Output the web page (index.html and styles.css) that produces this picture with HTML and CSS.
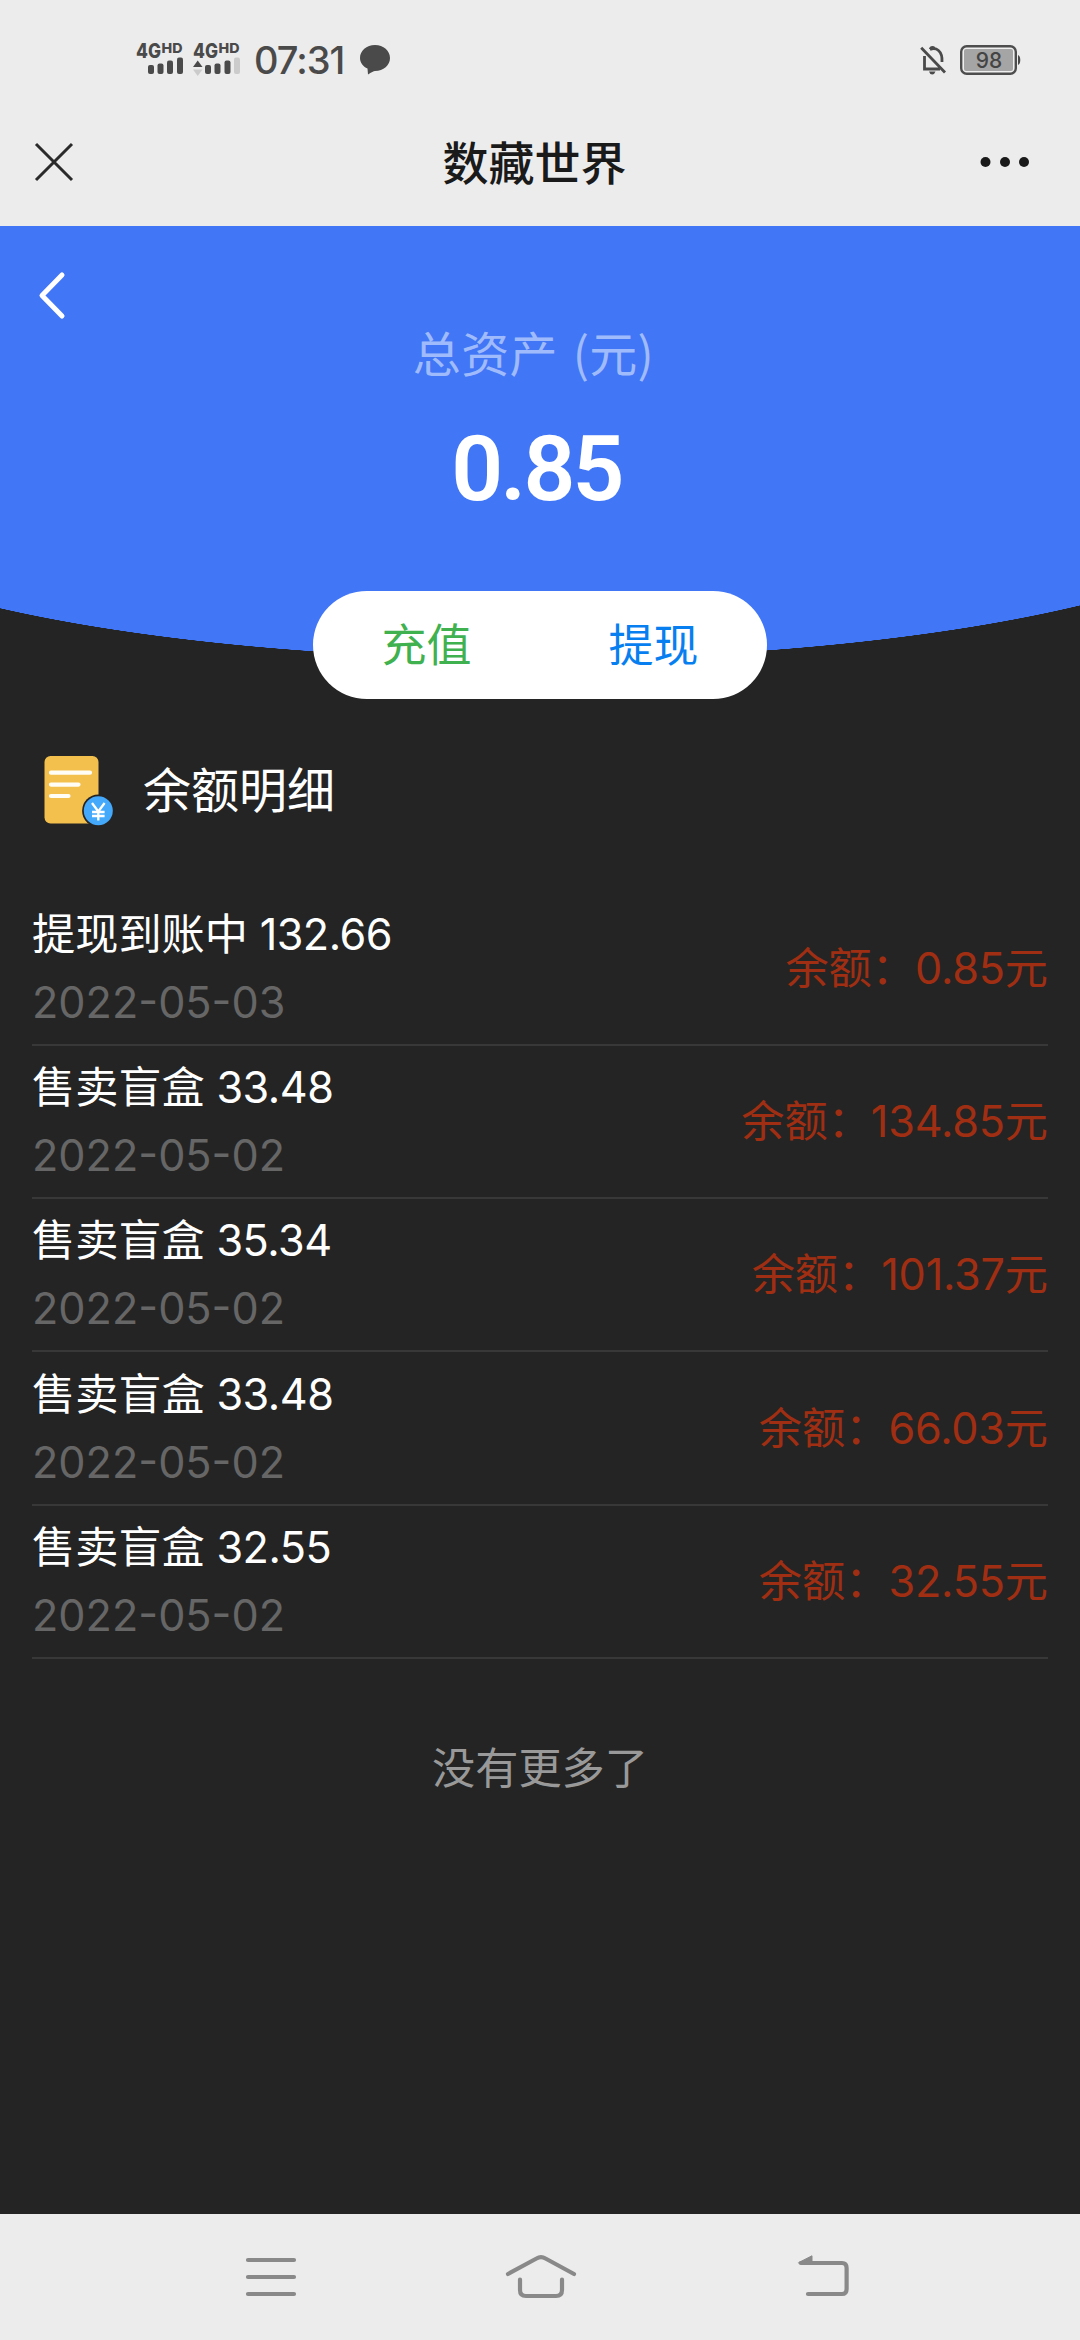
FILE: index.html
```html
<!DOCTYPE html>
<html lang="zh-CN">
<head>
<meta charset="utf-8">
<title>数藏世界</title>
<link rel="stylesheet" href="styles.css">
</head>
<body>
<div class="status-bar">
  <svg class="signal" width="48" height="38" viewBox="0 -4 48 38">
    <text class="net" x="0" y="16" textLength="25" lengthAdjust="spacingAndGlyphs">4G</text>
    <text class="net-hd" x="25.500" y="11" textLength="21" lengthAdjust="spacingAndGlyphs">HD</text>
    <g class="ink"><rect x="12" y="23" width="6" height="9" rx="2"/><rect x="21.500" y="21.500" width="6" height="10.500" rx="2"/><rect x="31" y="18.500" width="6" height="13.500" rx="2"/><rect x="41" y="15.500" width="6" height="16.500" rx="2"/></g>
  </svg>
  <svg class="signal second" width="48" height="38" viewBox="0 -4 48 38">
    <text class="net" x="0" y="16" textLength="25" lengthAdjust="spacingAndGlyphs">4G</text>
    <text class="net-hd" x="25.500" y="11" textLength="21" lengthAdjust="spacingAndGlyphs">HD</text>
    <path class="ink" d="M0 25L4.700 18.500 9.500 25z"/><path class="faint" d="M0 27.500H9.500L4.700 34z"/>
    <g class="ink"><rect x="12" y="23" width="6" height="9" rx="2"/><rect x="21.500" y="21.500" width="6" height="10.500" rx="2"/><rect x="31.500" y="18.500" width="6" height="13.500" rx="2"/></g>
    <rect class="faint" x="41" y="15.500" width="6" height="16.500" rx="2"/>
  </svg>
  <span class="clock">07:31</span>
  <svg class="bubble" width="30" height="30" viewBox="0 0 30 30"><path class="ink" d="M15 0C23.500 0 30 5.800 30 13S23.500 26 15 26Q13 26 8 29.500L7.500 23.500C3 21.500 0 17.500 0 13 0 5.800 6.500 0 15 0z"/></svg>
  <svg class="bell" width="28" height="30" viewBox="0 0 28 30"><path d="M1.200 1.800L25 26.500M4.500 10V23H20M10 3.500Q15 1.500 18.500 4.500 22.500 8 22 16" fill="none" stroke="#4a4a4a" stroke-width="2.800"/><path class="ink" d="M9 3Q9.500 0 12.500 0T15.500 3zM9 25.500H15.500Q14.500 28.500 12.200 28.500T9 25.500z"/></svg>
  <svg class="battery" width="61" height="30" viewBox="0 0 61 30"><rect x="1.200" y="1.200" width="54.600" height="27.600" rx="5.500" fill="#efefef" stroke="#4d4d4d" stroke-width="2.400"/><rect x="4" y="4" width="49" height="22" rx="2" fill="#a5a5a5"/><path class="ink" d="M58 10Q60.300 11 60.300 15T58 20z"/><text class="level" x="29" y="22.500" text-anchor="middle">98</text></svg>
</div>
<header class="title-bar">
  <svg width="38" height="38" viewBox="0 0 38 38"><path d="M1 1L37 37M37 1L1 37" stroke="#2a2a2a" stroke-width="3"/></svg>
  <h1>数藏世界</h1>
  <svg width="50" height="12" viewBox="0 0 50 12"><g fill="#1a1a1a"><circle cx="5.500" cy="6" r="5"/><circle cx="25" cy="6" r="5"/><circle cx="44" cy="6" r="5"/></g></svg>
</header>
<main>
  <section class="assets">
    <svg class="back" width="28" height="48" viewBox="0 0 28 48"><path d="M24 3L4 23.500 24 44" fill="none" stroke="#fff" stroke-width="5" stroke-linecap="round" stroke-linejoin="round"/></svg>
    <p class="label">总资产 (元)</p>
    <p class="total">0.85</p>
    <div class="actions"><span class="recharge">充值</span><span class="withdraw">提现</span></div>
  </section>
  <h2 class="section-title">
    <svg width="72" height="72" viewBox="0 0 72 72"><rect x="2.500" y="2" width="54" height="67.500" rx="6" fill="#f3c04e"/><path d="M9 18.700H48M9 30.600H36.500M9 42H26.500" stroke="#fffdf5" stroke-width="4.200" stroke-linecap="round"/><circle cx="56.300" cy="56.700" r="16.200" fill="#242424"/><circle cx="56.300" cy="56.700" r="14.500" fill="#44a8fb"/><path d="M50 49L56.300 57.500 62.600 49M56.300 57.500V66.500M50 58H62.600M50 62H62.600" fill="none" stroke="#fff" stroke-width="2.300"/></svg>
    <span>余额明细</span>
  </h2>
  <ul class="records">
    <li><div><p class="name">提现到账中 <b>132.66</b></p><p class="date">2022-05-03</p></div><p class="balance">余额：<b>0.85</b>元</p></li>
    <li><div><p class="name">售卖盲盒 <b>33.48</b></p><p class="date">2022-05-02</p></div><p class="balance">余额：<b>134.85</b>元</p></li>
    <li><div><p class="name">售卖盲盒 <b>35.34</b></p><p class="date">2022-05-02</p></div><p class="balance">余额：<b>101.37</b>元</p></li>
    <li><div><p class="name">售卖盲盒 <b>33.48</b></p><p class="date">2022-05-02</p></div><p class="balance">余额：<b>66.03</b>元</p></li>
    <li><div><p class="name">售卖盲盒 <b>32.55</b></p><p class="date">2022-05-02</p></div><p class="balance">余额：<b>32.55</b>元</p></li>
  </ul>
  <p class="end">没有更多了</p>
</main>
<nav class="nav-bar">
  <svg class="menu" width="50" height="40" viewBox="0 0 50 40"><path d="M2 3H48M2 20H48M2 37H48"/></svg>
  <svg class="home" width="74" height="44" viewBox="0 0 74 44"><path d="M4 19L32.500 3.500Q37 .8 41.500 3.500L70 19M16 24.500V35Q16 41 22 41H52Q58 41 58 35V24.500"/></svg>
  <svg class="return" width="52" height="44" viewBox="0 0 52 44"><path d="M3 8H44Q48.600 8 48.600 13V34Q48.600 39 44 39H10"/><path class="tip" d="M.8 7.500L14 .8V9H2z"/></svg>
</nav>
</body>
</html>
```
FILE: styles.css
```css
* { box-sizing: border-box; margin: 0; padding: 0; }
body {
  display: flex;
  flex-direction: column;
  width: 1080px;
  height: 2340px;
  overflow: hidden;
  background: #242424;
  color: #fff;
  font-family: "Noto Sans CJK SC", sans-serif;
}
svg { display: block; flex: none; overflow: visible; }
b, .date, .clock, .level { font-family: Inter, sans-serif; font-weight: 400; }
.ink { fill: #4a4a4a; }
.faint { fill: #cbcbcb; }

.status-bar {
  display: flex;
  align-items: flex-start;
  height: 96px;
  padding: 42px 59px 0 136px;
  background: #ececec;
  color: #4a4a4a;
}
.signal { margin-top: -4px; }
.second { margin-left: 9px; }
.net, .net-hd { font-family: Inter, sans-serif; font-weight: 800; fill: #4a4a4a; }
.net { font-size: 20px; }
.net-hd { font-size: 13.5px; }
.clock {
  width: 106px;
  margin-left: 13px;
  font-size: 38px;
  line-height: 37px;
  font-weight: 450;
  letter-spacing: -1px;
}
.bubble { margin: 3px auto 0 0; }
.bell { margin: 4px 12px 0 0; }
.battery { margin-top: 3px; }
.level { font-size: 21px; font-weight: 500; fill: #444; }

.title-bar {
  display: flex;
  align-items: center;
  justify-content: space-between;
  height: 130px;
  padding: 1px 50px 0 35px;
  background: #ececec;
  color: #1a1a1a;
}
.title-bar h1 { font-size: 46px; font-weight: 500; line-height: 60px; margin: 0 0 3px 16px; }

main { flex: 1; }
.assets {
  display: flex;
  flex-direction: column;
  align-items: center;
  height: 473px;
  padding-top: 46px;
  background: radial-gradient(ellipse 756px 173px at 534px 260px, #4176f6 99.8%, transparent 100%) no-repeat,
              linear-gradient(#4176f6, #4176f6) 0 0 / 100% 260px no-repeat;
}
.back { align-self: flex-start; margin-left: 38px; }
.label { margin: 1px 13px 0 0; font-size: 48px; line-height: 60px; word-spacing: 4px; letter-spacing: 0.3px; color: #a0bbfb; }
.total {
  margin: 38px 7px 0 0;
  font-family: Roboto, sans-serif;
  font-size: 91px;
  line-height: 100px;
  font-weight: 600;
  letter-spacing: -2.8px;
}
.actions {
  display: flex;
  width: 454px;
  height: 108px;
  margin-top: auto;
  border-radius: 54px;
  background: #fff;
  font-size: 45px;
  line-height: 104px;
  text-align: center;
}
.actions span { flex: 1; }
.recharge { color: #3fb14f; }
.withdraw { color: #087ff0; }

.section-title {
  display: flex;
  align-items: center;
  gap: 29px;
  height: 132px;
  margin-top: 24px;
  padding-left: 42px;
  font-size: 48px;
  font-weight: 400;
}
.section-title svg { margin-top: 2px; }
.section-title span { margin-bottom: 5px; }

.records { margin: 37.5px 32px 0; list-style: none; }
.records li {
  display: flex;
  justify-content: space-between;
  align-items: center;
  height: 153.3px;
  padding-bottom: 4px;
  border-bottom: 2px solid #383838;
  font-size: 43.2px;
  line-height: 68px;
}
.name b { margin-left: 2px; letter-spacing: -0.5px; }
.date { color: #666; }
.balance { color: #a02e12; }
.balance b { letter-spacing: -0.2px; }

.end { margin-top: 72px; font-size: 43.2px; line-height: 68px; text-align: center; color: #999; }

.nav-bar {
  display: flex;
  align-items: flex-start;
  height: 126px;
  padding: 41px 0 0 246px;
  background: #ececec;
}
.nav-bar path { fill: none; stroke: #898989; stroke-width: 4.2; stroke-linecap: round; stroke-linejoin: round; }
.nav-bar .tip { fill: #898989; stroke-width: 1; }
.menu { margin-top: 2px; }
.home { margin-left: 208px; }
.return { margin-left: 220px; }
```
